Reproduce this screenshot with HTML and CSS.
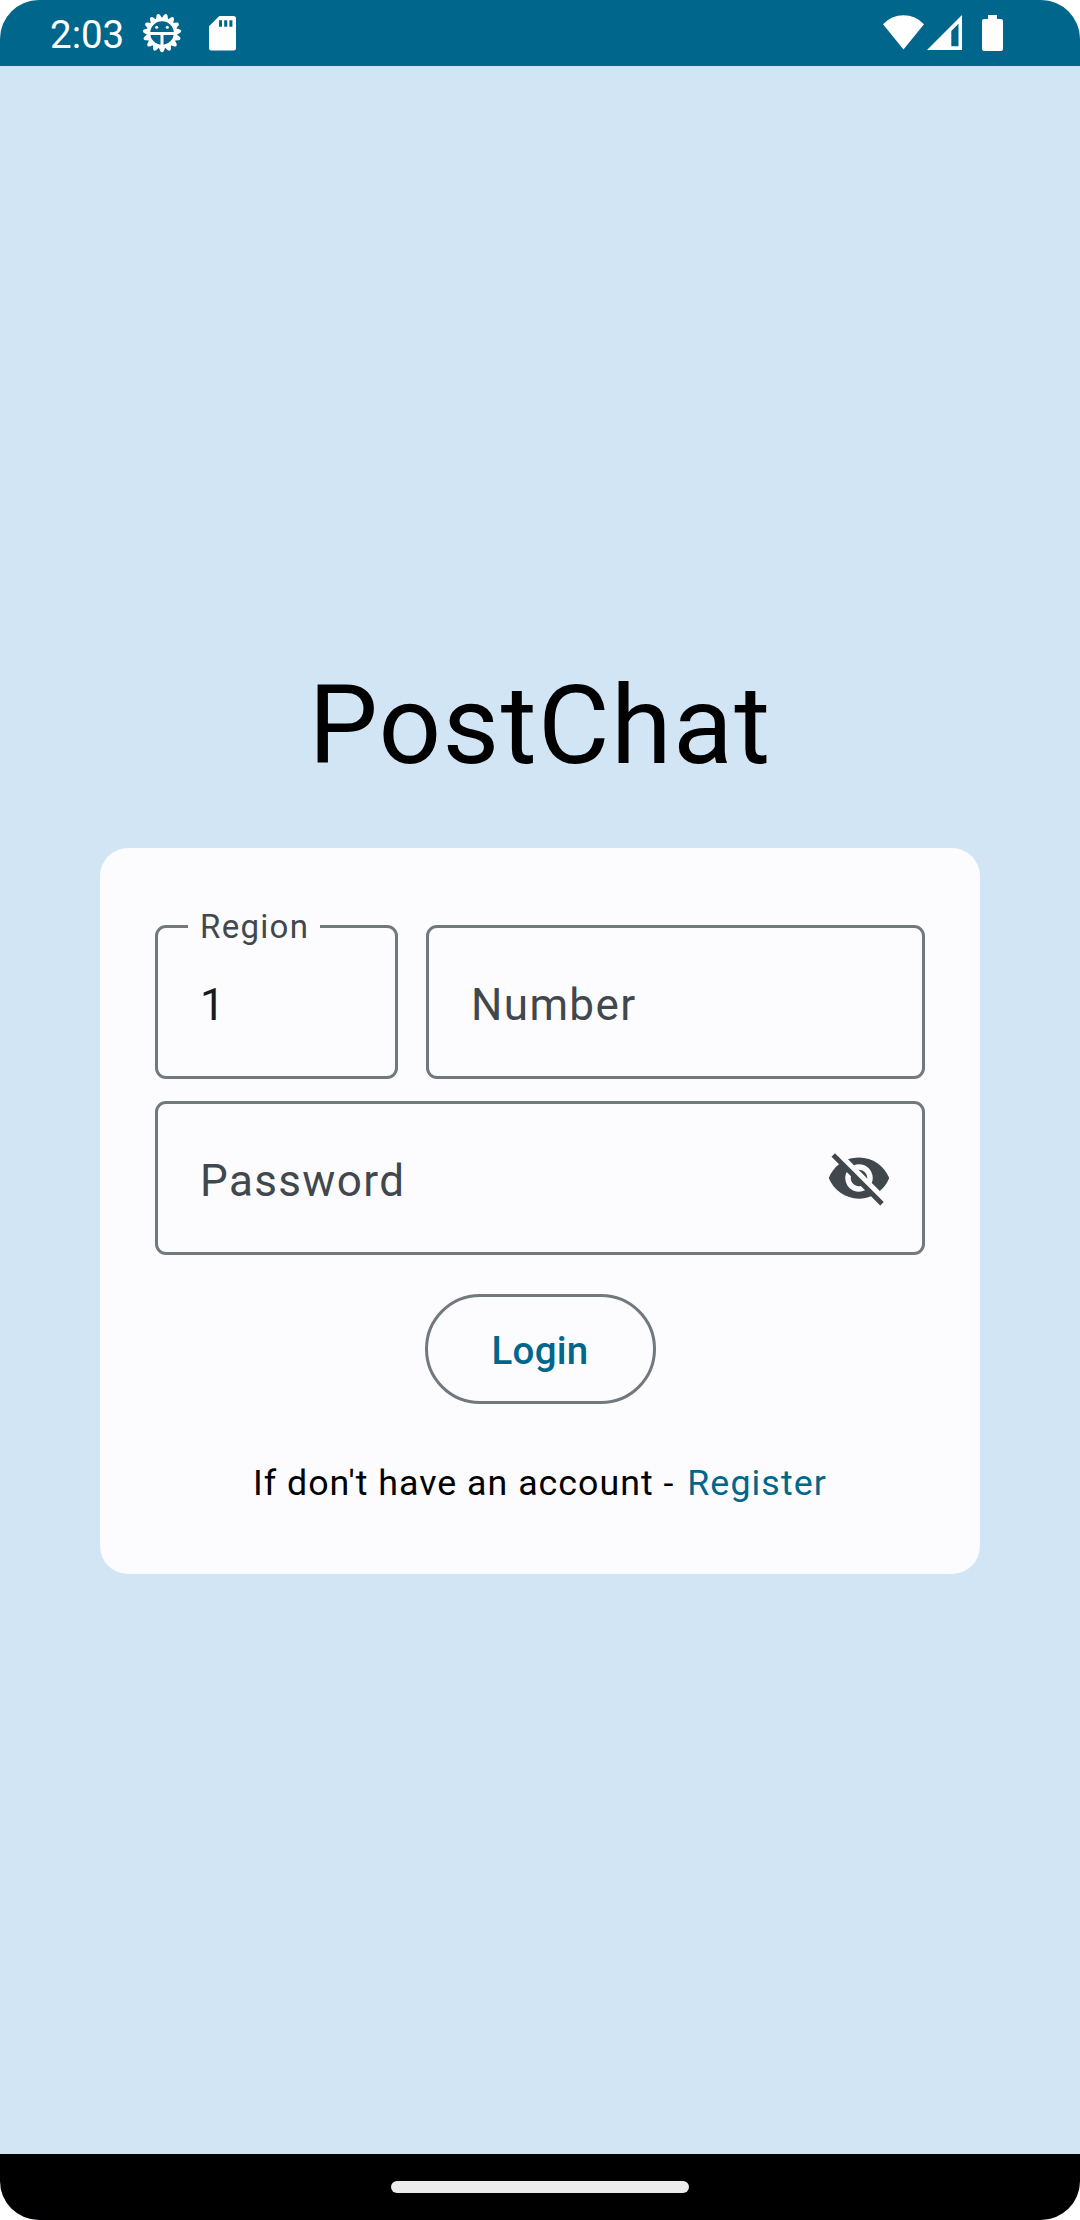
FILE: index.html
```html
<!DOCTYPE html>
<html lang="en">
<head>
<meta charset="utf-8">
<title>PostChat</title>
<link rel="stylesheet" href="styles.css">
</head>
<body>
<div class="screen">
  <header class="status-bar">
    <span class="clock">2:03</span>
    <svg class="icon-debug" width="40" height="40" viewBox="-20 -20 40 40">
      <defs><path id="tooth" d="M-3.400 14L-1.700 18.200Q0 20.400 1.700 18.200L3.400 14z"/></defs>
      <g fill="#fff">
        <use href="#tooth"/><use href="#tooth" transform="rotate(24)"/><use href="#tooth" transform="rotate(48)"/>
        <use href="#tooth" transform="rotate(72)"/><use href="#tooth" transform="rotate(96)"/><use href="#tooth" transform="rotate(120)"/>
        <use href="#tooth" transform="rotate(144)"/><use href="#tooth" transform="rotate(168)"/><use href="#tooth" transform="rotate(192)"/>
        <use href="#tooth" transform="rotate(216)"/><use href="#tooth" transform="rotate(240)"/><use href="#tooth" transform="rotate(264)"/>
        <use href="#tooth" transform="rotate(288)"/><use href="#tooth" transform="rotate(312)"/><use href="#tooth" transform="rotate(336)"/>
        <circle cx="-5.3" cy="-5.7" r="1.5"/><circle cx="5.3" cy="-5.7" r="1.5"/>
      </g>
      <circle r="13.5" fill="none" stroke="#fff" stroke-width="3.4"/>
      <path d="M-13 .4H13M0 .4V14" fill="none" stroke="#fff" stroke-width="3"/>
    </svg>
    <svg class="icon-sd" width="27" height="35" viewBox="0 0 27 35">
      <path fill="#fff" fill-rule="evenodd" d="M10.300 0H24.500Q27 0 27 2.500V32Q27 34.500 24.500 34.500H2.500Q0 34.500 0 32V10.300zM10 4.300V10.700H13V4.300zM15.200 4.300V10.700H18.200V4.300zM20.400 4.300V10.700H23.400V4.300z"/>
    </svg>
    <svg class="icon-wifi" width="42" height="35" viewBox="0 0 42 35">
      <path fill="#fff" d="M0 9.300A27.500 27.500 0 0 1 41 9.300L20.500 34.500z"/>
    </svg>
    <svg class="icon-signal" width="35" height="35" viewBox="0 0 35 35">
      <path fill="#fff" fill-rule="evenodd" d="M0 35L35 0V35zM24.300 16V31.300H31.500V8.800z"/>
    </svg>
    <svg class="icon-battery" width="21" height="36" viewBox="0 0 21 36">
      <path fill="#fff" d="M6 0H15V4H19Q21 4 21 6V34Q21 36 19 36H2Q0 36 0 34V6Q0 4 2 4H6z"/>
    </svg>
  </header>

  <main class="content">
    <h1 class="title">PostChat</h1>
    <form class="card">
      <div class="row">
        <div class="field field-region">
          <span class="field-label">Region</span>
          <span class="field-value">1</span>
        </div>
        <div class="field field-number"><span class="field-hint">Number</span></div>
      </div>
      <div class="field field-password">
        <span class="field-hint">Password</span>
        <svg class="icon-eye" width="66" height="66" viewBox="0 0 24 24">
          <path fill="#41484d" d="M12 7c2.760 0 5 2.240 5 5 0 .65-.13 1.260-.36 1.830l2.920 2.920c1.510-1.260 2.700-2.890 3.430-4.750-1.730-4.390-6-7.500-11-7.500-1.400 0-2.740.25-3.980.7l2.160 2.160C10.740 7.130 11.350 7 12 7zM2 4.270l2.280 2.280.46.46C3.080 8.300 1.780 10.020 1 12c1.730 4.390 6 7.500 11 7.500 1.550 0 3.030-.3 4.380-.84l.42.42L19.730 22 21 20.730 3.270 3 2 4.270zM7.530 9.800l1.550 1.550c-.05.21-.08.43-.08.65 0 1.660 1.340 3 3 3 .22 0 .44-.03.65-.08l1.550 1.550c-.67.33-1.410.53-2.200.53-2.760 0-5-2.240-5-5 0-.79.2-1.530.53-2.200zm4.310-.78l3.150 3.150.02-.16c0-1.660-1.340-3-3-3l-.17.01z"/>
        </svg>
      </div>
      <button class="login" type="button">Login</button>
      <p class="signup">If don't have an account - <a class="register">Register</a></p>
    </form>
  </main>

  <footer class="nav-bar"><div class="nav-handle"></div></footer>
</div>
</body>
</html>
```
FILE: styles.css
```css
* {
  box-sizing: border-box;
}

body {
  margin: 0;
  background: #fff;
  font-family: Roboto, sans-serif;
}

.screen {
  display: flex;
  flex-direction: column;
  width: 1080px;
  height: 2220px;
  border-radius: 39px;
  overflow: hidden;
  background: #d2e5f4;
}

/* System status bar */
.status-bar {
  display: flex;
  align-items: flex-start;
  height: 66px;
  padding: 15px 77px 0 50px;
  background: #00668b;
}

.clock {
  width: 92px;
  font-size: 38.5px;
  line-height: 40px;
  color: #fff;
}

.icon-debug {
  margin-top: -2px;
}

.icon-sd {
  margin: 1px 0 0 27px;
}

.icon-wifi {
  margin-left: auto;
}

.icon-signal {
  margin-left: 2px;
}

.icon-battery {
  margin-left: 20px;
}

/* Login form */
.content {
  flex: 1;
  padding: 596px 100px 0;
}

.title {
  margin: 0 0 58px;
  font-size: 110px;
  font-weight: 400;
  line-height: 128px;
  letter-spacing: 1.375px;
  text-align: center;
  color: #000;
}

.card {
  display: flex;
  flex-direction: column;
  height: 726px;
  padding: 77px 55px 0;
  border-radius: 28px;
  background: #fcfcff;
}

.row {
  display: flex;
  gap: 28px;
  margin-bottom: 22px;
}

.field {
  position: relative;
  display: flex;
  align-items: center;
  height: 154px;
  padding: 0 30px 0 42px;
  border: 3px solid #71787e;
  border-radius: 11px;
  font-size: 44px;
  line-height: 66px;
  letter-spacing: 1.375px;
}

.field-region {
  width: 243px;
}

.field-number {
  flex: 1;
}

.field-password {
  justify-content: space-between;
}

.field-value,
.field-hint {
  padding-top: 6px;
}

.field-value {
  color: #191c1e;
}

.field-hint {
  color: #41484d;
}

.field-label {
  position: absolute;
  top: -18px;
  left: 30px;
  width: 132px;
  padding-left: 12px;
  background: #fcfcff;
  font-size: 33px;
  line-height: 34px;
  letter-spacing: 1.3px;
  color: #41484d;
}

.login {
  align-self: center;
  width: 231px;
  height: 110px;
  margin-top: 39px;
  padding: 4px 0 0;
  border: 3px solid #71787e;
  border-radius: 55px;
  background: none;
  font: 500 38.5px/44px Roboto, sans-serif;
  letter-spacing: 0.275px;
  color: #00668b;
}

.signup {
  margin: 57px 0 0;
  font-size: 35.75px;
  line-height: 44px;
  letter-spacing: 1px;
  text-align: center;
  white-space: nowrap;
  color: #000;
}

.register {
  margin-left: 3px;
  letter-spacing: 1.1px;
  color: #00668b;
}

/* Gesture navigation */
.nav-bar {
  display: flex;
  justify-content: center;
  height: 66px;
  padding-top: 27px;
  background: #000;
}

.nav-handle {
  width: 298px;
  height: 12px;
  border-radius: 6px;
  background: #ececec;
}
```
